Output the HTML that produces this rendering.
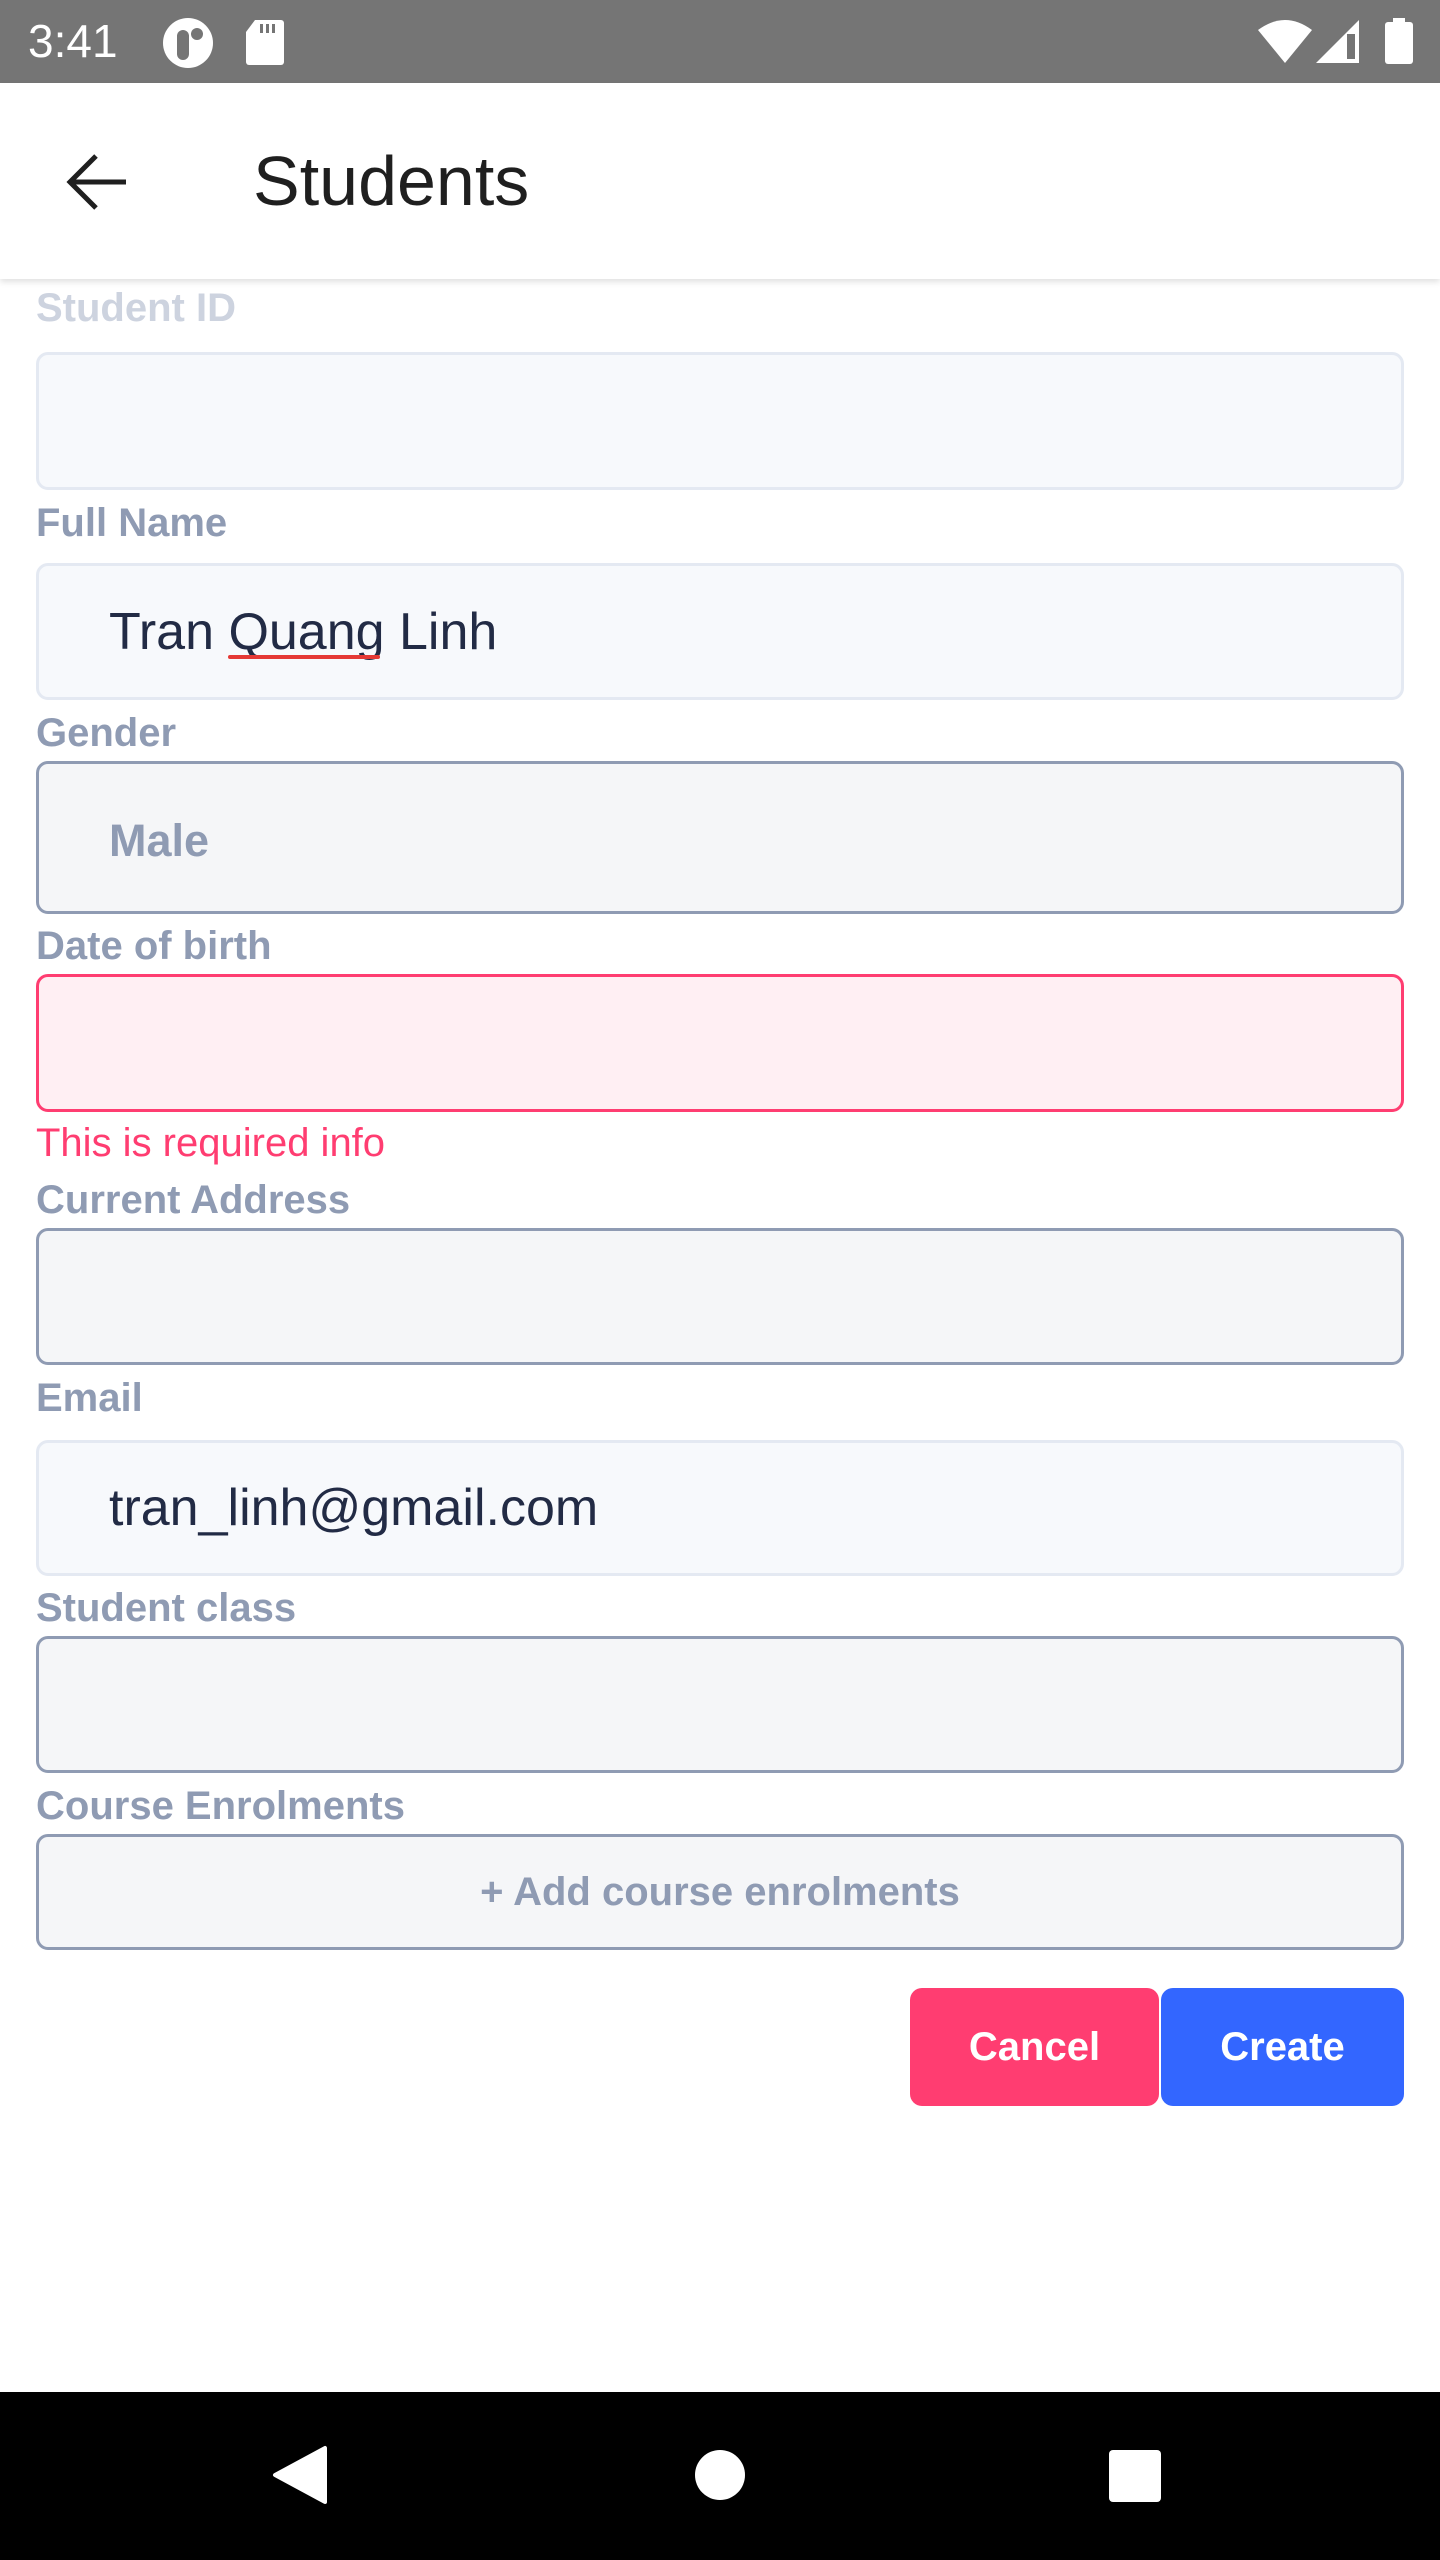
<!DOCTYPE html>
<html><head><meta charset="utf-8"><style>
*{margin:0;padding:0;box-sizing:border-box}
body{width:1440px;height:2560px;position:relative;background:#fff;font-family:"Liberation Sans",sans-serif;overflow:hidden}
.a{position:absolute}
.lbl{position:absolute;left:36px;font-size:40px;line-height:40px;font-weight:bold;color:#8f9bb3;white-space:nowrap}
.box{position:absolute;left:36px;width:1368px;border-radius:12px}
.lt{background:#f7f9fc;border:3px solid #e4e9f2}
.dk{background:#f5f6f8;border:3px solid #8f9bb3}
.val{position:absolute;left:109px;font-size:52px;line-height:52px;color:#222b45;white-space:nowrap}
</style></head><body>
<div class="a" style="left:0;top:0;width:1440px;height:83px;background:#757575"></div>
<div class="a" style="left:28px;top:18px;font-size:46px;line-height:46px;color:#fff">3:41</div>
<svg class="a" style="left:160px;top:16px" width="56" height="54" viewBox="0 0 56 54"><ellipse cx="28" cy="27" rx="25" ry="25" fill="#fff"/><rect x="17" y="14" width="12" height="30" rx="6" fill="#757575"/><circle cx="37" cy="18" r="6" fill="#757575"/></svg>
<svg class="a" style="left:245px;top:18px" width="40" height="48" viewBox="0 0 40 48"><path d="M10 2 H36 a3 3 0 0 1 3 3 V44 a3 3 0 0 1 -3 3 H4 a3 3 0 0 1 -3 -3 V14 Z" fill="#fff"/><rect x="15" y="6" width="3" height="9" fill="#757575"/><rect x="21" y="6" width="3" height="9" fill="#757575"/><rect x="27" y="6" width="3" height="9" fill="#757575"/></svg>
<svg class="a" style="left:1258px;top:20px" width="54" height="44" viewBox="0 0 54 44"><path d="M0 10 Q27 -10 54 10 L27 43 Z" fill="#fff"/></svg>
<svg class="a" style="left:1316px;top:20px" width="44" height="44" viewBox="0 0 44 44"><path d="M0 43 L43 0 V43 Z" fill="#fff"/><rect x="31" y="14" width="8" height="25" fill="#757575"/></svg>
<svg class="a" style="left:1385px;top:18px" width="28" height="46" viewBox="0 0 28 46"><rect x="8" y="0" width="12" height="6" fill="#fff"/><rect x="0" y="4" width="28" height="42" rx="3" fill="#fff"/></svg>

<div class="a" style="left:0;top:83px;width:1440px;height:196px;background:#fff;box-shadow:0 3px 6px rgba(0,0,0,0.12)"></div>
<svg class="a" style="left:66px;top:152px" width="64" height="60" viewBox="0 0 64 60"><path d="M4 30 H60 M30 4 L4 30 L30 56" stroke="#1f1f1f" stroke-width="5" fill="none"/></svg>
<div class="a" style="left:253px;top:146px;font-size:70px;line-height:70px;color:#1f1f1f">Students</div>

<div class="lbl" style="top:288px;color:#cdd3df">Student ID</div>
<div class="box lt" style="top:352px;height:138px"></div>

<div class="lbl" style="top:503px">Full Name</div>
<div class="box lt" style="top:563px;height:137px"></div>
<div class="val" style="top:606px">Tran Quang Linh</div>
<div class="a" style="left:228px;top:655px;width:152px;height:4px;background:#e53935;border-radius:2px"></div>

<div class="lbl" style="top:713px">Gender</div>
<div class="box dk" style="top:761px;height:153px"></div>
<div class="val" style="top:818px;font-weight:bold;font-size:45px;line-height:45px;color:#8f9bb3">Male</div>

<div class="lbl" style="top:926px">Date of birth</div>
<div class="box" style="top:974px;height:138px;background:#ffeff3;border:3px solid #ff3d71"></div>
<div class="a" style="left:36px;top:1123px;font-size:40px;line-height:40px;color:#ff3d71">This is required info</div>

<div class="lbl" style="top:1180px">Current Address</div>
<div class="box dk" style="top:1228px;height:137px"></div>

<div class="lbl" style="top:1378px">Email</div>
<div class="box lt" style="top:1440px;height:136px"></div>
<div class="val" style="top:1482px">tran_linh@gmail.com</div>

<div class="lbl" style="top:1588px">Student class</div>
<div class="box dk" style="top:1636px;height:137px"></div>

<div class="lbl" style="top:1786px">Course Enrolments</div>
<div class="box dk" style="top:1834px;height:116px;display:flex;align-items:center;justify-content:center;font-weight:bold;font-size:40px;color:#8f9bb3">+ Add course enrolments</div>

<div class="a" style="left:910px;top:1988px;width:249px;height:118px;background:#ff3d71;border-radius:12px;display:flex;align-items:center;justify-content:center;color:#fff;font-weight:bold;font-size:40px">Cancel</div>
<div class="a" style="left:1161px;top:1988px;width:243px;height:118px;background:#3366ff;border-radius:12px;display:flex;align-items:center;justify-content:center;color:#fff;font-weight:bold;font-size:40px">Create</div>

<div class="a" style="left:0;top:2392px;width:1440px;height:168px;background:#000"></div>
<svg class="a" style="left:270px;top:2445px" width="60" height="60" viewBox="0 0 60 60"><path d="M55 3 V57 L5 30 Z" fill="#fff" stroke="#fff" stroke-width="4" stroke-linejoin="round"/></svg>
<div class="a" style="left:695px;top:2450px;width:50px;height:50px;border-radius:50%;background:#fff"></div>
<div class="a" style="left:1109px;top:2450px;width:52px;height:52px;border-radius:4px;background:#fff"></div>
</body></html>
